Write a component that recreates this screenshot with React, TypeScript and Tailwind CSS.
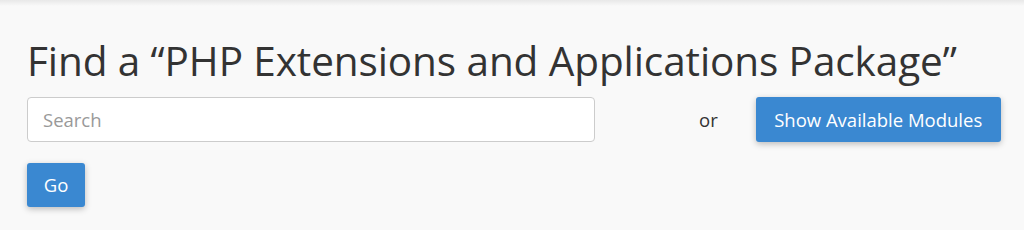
export default function App() {
  return (
    <div
      className="relative h-[230px] w-[1024px] overflow-hidden bg-[#f9f9f9] text-[#333]"
      style={{ fontFamily: '"Open Sans", sans-serif' }}
    >
      <div className="h-[6px] bg-gradient-to-b from-[#e8e8e8] to-[#f9f9f9]" />
      <div className="pl-[27px] pt-[31px]">
        <h1 className="text-[40.5px] leading-[48px] font-normal tracking-[-0.1px] text-[#333]">
          Find a “PHP Extensions and Applications Package”
        </h1>
        <div className="mt-[12px] flex items-center">
          <input
            type="text"
            placeholder="Search"
            className="h-[45px] w-[568px] rounded-[4px] border border-[#ccc] bg-white px-[15px] text-[18.5px] text-[#333] placeholder:text-[#999] outline-none"
          />
          <span className="ml-[104px] text-[18.5px] text-[#333]">or</span>
          <button className="ml-[38px] h-[45px] w-[245px] rounded-[3px] bg-[#3a88d1] text-[18.5px] text-white shadow-[0_2px_6px_rgba(0,0,0,0.25)]">
            Show Available Modules
          </button>
        </div>
        <button className="mt-[21px] h-[44px] w-[58px] rounded-[3px] bg-[#3a88d1] text-[18.5px] text-white shadow-[0_2px_6px_rgba(0,0,0,0.25)]">
          Go
        </button>
      </div>
    </div>
  )
}
